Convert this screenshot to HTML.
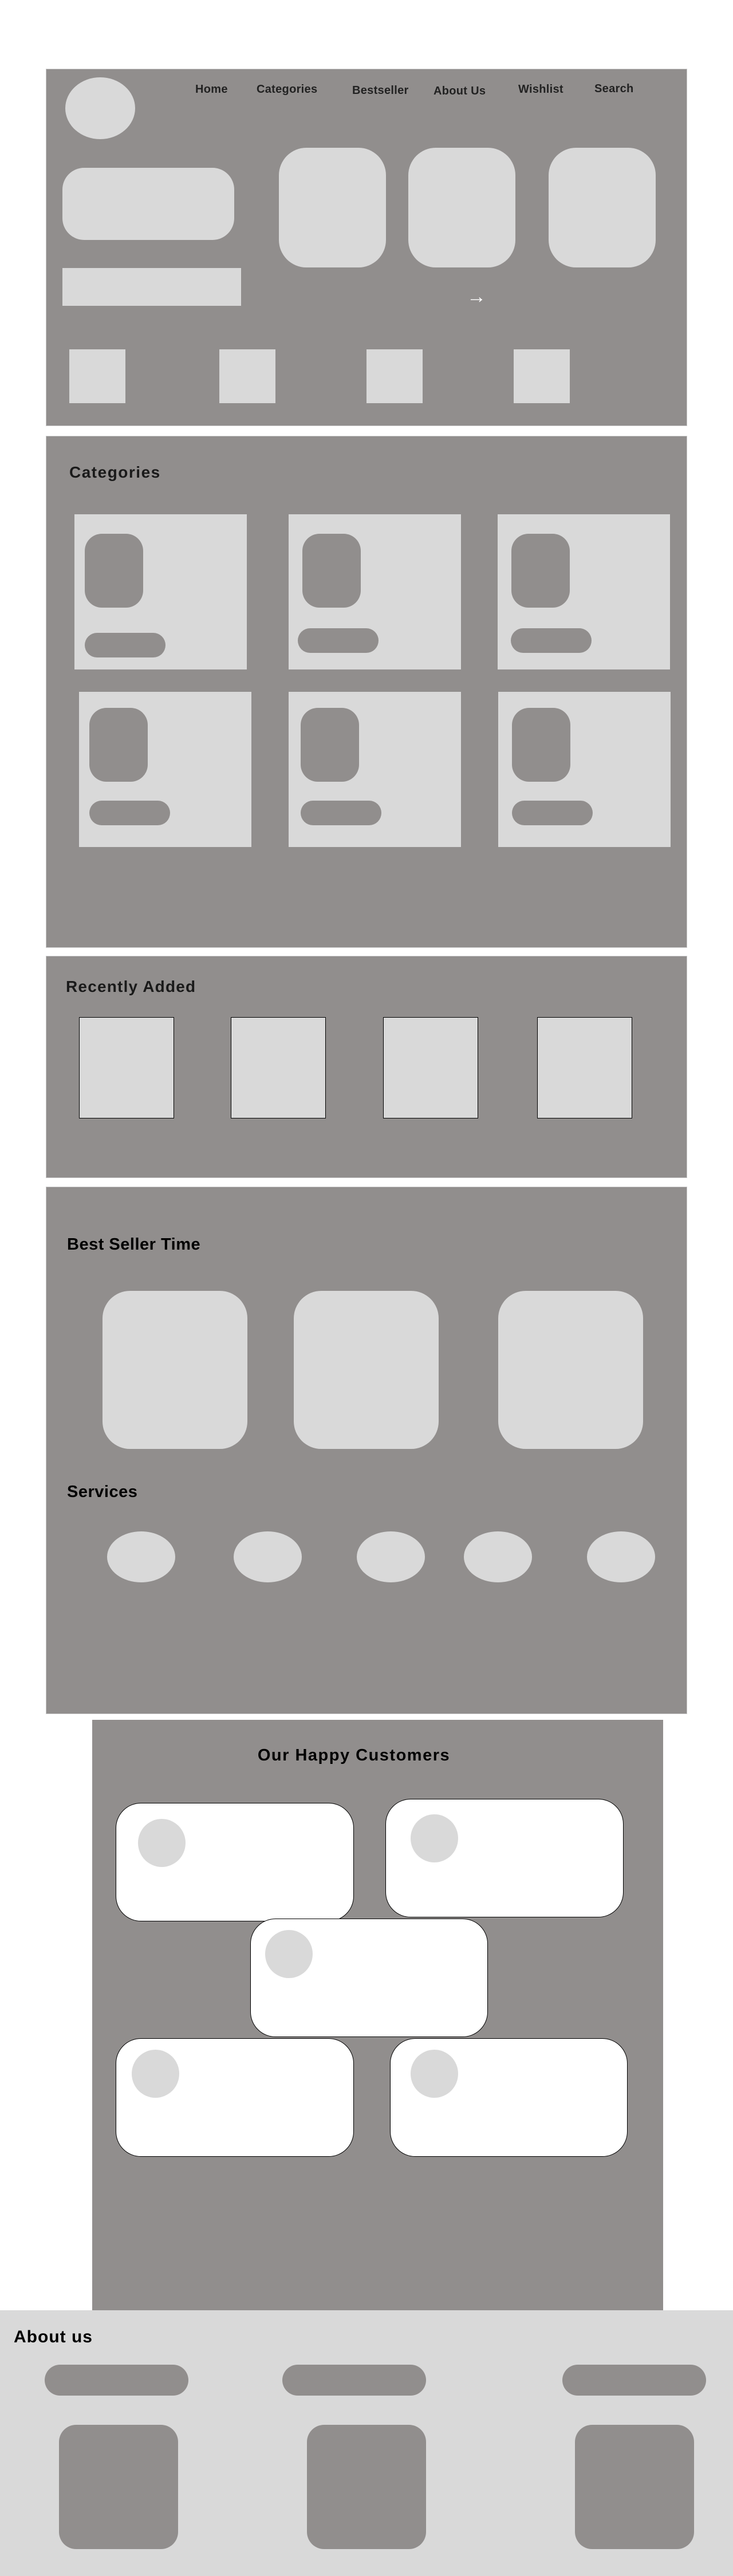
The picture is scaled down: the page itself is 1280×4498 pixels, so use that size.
<!DOCTYPE html>
<html><head><meta charset="utf-8"><style>
*{margin:0;padding:0;box-sizing:border-box}
body{width:1280px;height:4498px;background:#fff;position:relative;font-family:"Liberation Sans",sans-serif;overflow:hidden}
.a{position:absolute}
.sec{position:absolute;background:#918e8d;border:1px solid #c8c8c8}
.l{background:#d9d9d9}
.d{background:#918e8d}
.nav{position:absolute;font-size:20px;font-weight:bold;color:#222;top:145px;white-space:nowrap;letter-spacing:0.3px}
.h{position:absolute;font-weight:bold;color:#1a1a1a;white-space:nowrap}
.sq{position:absolute;background:#d9d9d9;border:1px solid #000}
.cc{position:absolute;background:#fff;border:1px solid #000;border-radius:44px}
.cir{position:absolute;background:#d9d9d9;border-radius:50%}
</style></head><body>
<div class="sec" style="left:80px;top:120px;width:1120px;height:624px"></div>
<div class="a l" style="left:114px;top:135px;width:122px;height:108px;border-radius:50%"></div>
<div class="nav" style="left:341px">Home</div>
<div class="nav" style="left:448px">Categories</div>
<div class="nav" style="left:615px;top:147px">Bestseller</div>
<div class="nav" style="left:757px;top:148px">About Us</div>
<div class="nav" style="left:905px">Wishlist</div>
<div class="nav" style="left:1038px;top:144px">Search</div>
<div class="a l" style="left:109px;top:293px;width:300px;height:126px;border-radius:38px"></div>
<div class="a l" style="left:487px;top:258px;width:187px;height:209px;border-radius:48px"></div>
<div class="a l" style="left:713px;top:258px;width:187px;height:209px;border-radius:48px"></div>
<div class="a l" style="left:958px;top:258px;width:187px;height:209px;border-radius:48px"></div>
<div class="a l" style="left:109px;top:468px;width:312px;height:66px"></div>
<div class="a" style="left:815px;top:500px;color:#fff;font-size:34px;line-height:36px">→</div>
<div class="a l" style="left:121px;top:610px;width:98px;height:94px"></div>
<div class="a l" style="left:383px;top:610px;width:98px;height:94px"></div>
<div class="a l" style="left:640px;top:610px;width:98px;height:94px"></div>
<div class="a l" style="left:897px;top:610px;width:98px;height:94px"></div>
<div class="sec" style="left:80px;top:761px;width:1120px;height:894px"></div>
<div class="h" style="left:121px;top:809px;font-size:28px;letter-spacing:1.5px">Categories</div>
<div class="a l" style="left:130px;top:898px;width:301px;height:271px"></div>
<div class="a l" style="left:504px;top:898px;width:301px;height:271px"></div>
<div class="a l" style="left:869px;top:898px;width:301px;height:271px"></div>
<div class="a d" style="left:148px;top:932px;width:102px;height:129px;border-radius:30px"></div>
<div class="a d" style="left:528px;top:932px;width:102px;height:129px;border-radius:30px"></div>
<div class="a d" style="left:893px;top:932px;width:102px;height:129px;border-radius:30px"></div>
<div class="a d" style="left:148px;top:1105px;width:141px;height:43px;border-radius:22px"></div>
<div class="a d" style="left:520px;top:1097px;width:141px;height:43px;border-radius:22px"></div>
<div class="a d" style="left:892px;top:1097px;width:141px;height:43px;border-radius:22px"></div>
<div class="a l" style="left:138px;top:1208px;width:301px;height:271px"></div>
<div class="a l" style="left:504px;top:1208px;width:301px;height:271px"></div>
<div class="a l" style="left:870px;top:1208px;width:301px;height:271px"></div>
<div class="a d" style="left:156px;top:1236px;width:102px;height:129px;border-radius:30px"></div>
<div class="a d" style="left:525px;top:1236px;width:102px;height:129px;border-radius:30px"></div>
<div class="a d" style="left:894px;top:1236px;width:102px;height:129px;border-radius:30px"></div>
<div class="a d" style="left:156px;top:1398px;width:141px;height:43px;border-radius:22px"></div>
<div class="a d" style="left:525px;top:1398px;width:141px;height:43px;border-radius:22px"></div>
<div class="a d" style="left:894px;top:1398px;width:141px;height:43px;border-radius:22px"></div>
<div class="sec" style="left:80px;top:1669px;width:1120px;height:388px"></div>
<div class="h" style="left:115px;top:1707px;font-size:28px;letter-spacing:1.2px">Recently Added</div>
<div class="sq" style="left:138px;top:1776px;width:166px;height:177px"></div>
<div class="sq" style="left:403px;top:1776px;width:166px;height:177px"></div>
<div class="sq" style="left:669px;top:1776px;width:166px;height:177px"></div>
<div class="sq" style="left:938px;top:1776px;width:166px;height:177px"></div>
<div class="sec" style="left:80px;top:2072px;width:1120px;height:921px"></div>
<div class="h" style="left:117px;top:2157px;font-size:29px;color:#000;letter-spacing:0.5px">Best Seller Time</div>
<div class="a l" style="left:179px;top:2254px;width:253px;height:276px;border-radius:48px"></div>
<div class="a l" style="left:513px;top:2254px;width:253px;height:276px;border-radius:48px"></div>
<div class="a l" style="left:870px;top:2254px;width:253px;height:276px;border-radius:48px"></div>
<div class="h" style="left:117px;top:2589px;font-size:29px;color:#000;letter-spacing:0.5px">Services</div>
<div class="cir" style="left:187px;top:2674px;width:119px;height:89px"></div>
<div class="cir" style="left:408px;top:2674px;width:119px;height:89px"></div>
<div class="cir" style="left:623px;top:2674px;width:119px;height:89px"></div>
<div class="cir" style="left:810px;top:2674px;width:119px;height:89px"></div>
<div class="cir" style="left:1025px;top:2674px;width:119px;height:89px"></div>
<div class="a d" style="left:161px;top:3003px;width:997px;height:1031px"></div>
<div class="h" style="left:418px;top:3049px;font-size:29px;color:#000;width:400px;text-align:center;letter-spacing:1.5px">Our Happy Customers</div>
<div class="cc" style="left:202px;top:3148px;width:416px;height:207px"></div>
<div class="cir" style="left:241px;top:3176px;width:83px;height:84px"></div>
<div class="cc" style="left:673px;top:3141px;width:416px;height:207px"></div>
<div class="cir" style="left:717px;top:3168px;width:83px;height:84px"></div>
<div class="cc" style="left:437px;top:3350px;width:415px;height:207px"></div>
<div class="cir" style="left:463px;top:3370px;width:83px;height:84px"></div>
<div class="cc" style="left:202px;top:3559px;width:416px;height:207px"></div>
<div class="cir" style="left:230px;top:3579px;width:83px;height:84px"></div>
<div class="cc" style="left:681px;top:3559px;width:415px;height:207px"></div>
<div class="cir" style="left:717px;top:3579px;width:83px;height:84px"></div>
<div class="a l" style="left:0;top:4034px;width:1280px;height:464px"></div>
<div class="h" style="left:24px;top:4064px;font-size:30px;color:#000;letter-spacing:1px">About us</div>
<div class="a d" style="left:78px;top:4129px;width:251px;height:54px;border-radius:27px"></div>
<div class="a d" style="left:493px;top:4129px;width:251px;height:54px;border-radius:27px"></div>
<div class="a d" style="left:982px;top:4129px;width:251px;height:54px;border-radius:27px"></div>
<div class="a d" style="left:103px;top:4234px;width:208px;height:217px;border-radius:30px"></div>
<div class="a d" style="left:536px;top:4234px;width:208px;height:217px;border-radius:30px"></div>
<div class="a d" style="left:1004px;top:4234px;width:208px;height:217px;border-radius:30px"></div>
</body></html>
